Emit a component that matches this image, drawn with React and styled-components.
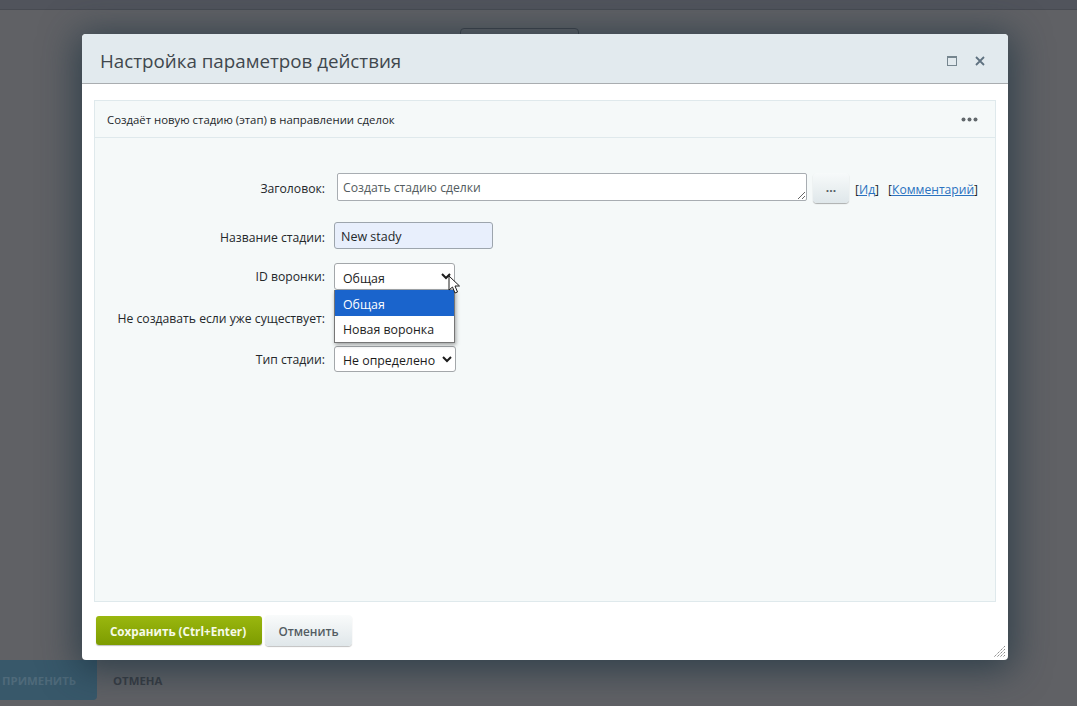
import React from "react";
import styled, { createGlobalStyle } from "styled-components";

const Global = createGlobalStyle`
html, body {
    margin : 0;
    padding : 0;
    background : #606165;
}
* {
    box-sizing : border-box;
}
`

const Page = styled.div`
width : 1077px;
height : 706px;
position : relative;
overflow : hidden;
display : flex;
flex-direction : column;
background : #606165;
font-family : "Open Sans", "Noto Sans", sans-serif;
`

const TopBar = styled.div`
height : 10px;
flex : none;
background : #51545c;
border-bottom : 1px solid #484b52;
`

const GhostRow = styled.div`
flex : 1;
padding : 18px 0 0 460px;
`

const GhostButton = styled.div`
width : 119px;
height : 30px;
border : 1px solid #3f4248;
border-radius : 4px;
`

const BottomBar = styled.div`
flex : none;
height : 46px;
padding-bottom : 6px;
display : flex;
align-items : stretch;
font-size : 11.4px;
font-weight : 700;
`

const ApplyGhost = styled.div`
width : 97px;
display : flex;
align-items : center;
padding-left : 2px;
background : #38586a;
color : #4f6a7a;
border-radius : 0 0 4px 0;
`

const CancelGhost = styled.div`
display : flex;
align-items : center;
padding-left : 16px;
color : #383b42;
`

const Overlay = styled.div`
position : absolute;
inset : 0;
padding : 34px 69px 46px 82px;
`

const Modal = styled.div`
height : 100%;
position : relative;
display : flex;
flex-direction : column;
background : #fff;
border-radius : 4px;
box-shadow : 0 5px 36px 5px rgba(28, 50, 64, 0.72);
`

const Header = styled.div`
flex : none;
height : 50px;
display : flex;
align-items : center;
justify-content : space-between;
padding : 4px 23px 0 18px;
background : #e2eaee;
border-bottom : 1px solid #a9adb0;
border-radius : 4px 4px 0 0;
`

const Title = styled.h1`
margin : 0;
font-size : 18.75px;
font-weight : 400;
color : #3f474d;
`

const HeaderIcons = styled.div`
display : flex;
align-items : center;
gap : 18px;
`

const Body = styled.div`
flex : 1;
min-height : 0;
padding : 16px 12px 0 12px;
`

const Panel = styled.div`
height : 100%;
display : flex;
flex-direction : column;
background : #f5f9f9;
border : 1px solid #dfe9ec;
`

const PanelHead = styled.div`
flex : none;
height : 37px;
display : flex;
align-items : center;
justify-content : space-between;
padding : 0 17px 0 12px;
border-bottom : 1px solid #dfe9ec;
font-size : 11.37px;
color : #24282b;
`

const Form = styled.div`
display : flex;
flex-direction : column;
gap : 14px;
padding-top : 35px;
`

const Row = styled.div`
display : flex;
align-items : flex-start;
height : ${props => props.$height}px;
margin-bottom : ${props => props.$after || 0}px;
`

const Label = styled.div`
width : 230px;
flex : none;
padding-top : ${props => props.$top}px;
text-align : right;
font-size : 12.2px;
line-height : 17px;
color : #24282b;
`

const Field = styled.div`
margin-left : ${props => props.$left}px;
display : flex;
align-items : flex-start;
position : relative;
`

const TitleArea = styled.textarea`
width : 470px;
height : 28px;
margin : 0;
padding : 6px 5px 4px 5px;
display : block;
font-family : inherit;
font-size : 12.2px;
line-height : 16px;
color : #535c60;
background : #fff;
border : 1px solid #a8adb2;
border-radius : 2px;
outline : none;
overflow : hidden;
`

const DotsButton = styled.button`
width : 36px;
height : 30px;
margin-left : 6px;
padding : 0 0 2px 0;
font-family : inherit;
font-size : 12px;
font-weight : 700;
color : #535c62;
background : linear-gradient(to bottom, #f7fafa, #dfe7ea);
border : none;
border-radius : 4px;
box-shadow : 0 1px 1px rgba(0, 0, 0, 0.3);
`

const LinkGroup = styled.div`
margin-left : ${props => props.$left}px;
padding-top : 8px;
font-size : 12.1px;
line-height : 17px;
color : #24282b;
`

const TextLink = styled.a`
color : #2a72c0;
text-decoration : underline;
`

const NameInput = styled.input`
width : 159px;
height : 27px;
padding : 2px 6px 0 6px;
font-family : inherit;
font-size : 12.5px;
color : #24282b;
background : #e8effc;
border : 1px solid #9da5ad;
border-radius : 3px;
outline : none;
`

const NativeSelect = styled.select`
width : ${props => props.$width}px;
height : ${props => props.$height}px;
padding : 3px 0 0 4px;
font-family : inherit;
font-size : 12.35px;
color : #1c1c1c;
background-color : #fff;
border : 1px solid #a3a7aa;
border-radius : 3px;
outline : none;
`

const OptionList = styled.div`
position : absolute;
top : 27px;
left : 0;
width : 121px;
z-index : 5;
background : #fff;
border : 1px solid #767676;
border-top : none;
box-shadow : 1px 2px 4px rgba(0, 0, 0, 0.35);
`

const OptionItem = styled.div`
height : 26px;
padding : ${props => props.$active ? 2 : 0}px 0 0 8px;
display : flex;
align-items : center;
font-size : 12.35px;
color : ${props => props.$active ? "#fff" : "#1c1c1c"};
background : ${props => props.$active ? "#1a64cc" : "transparent"};
`

const Cursor = styled.svg`
position : absolute;
top : 12px;
left : 114px;
z-index : 6;
`

const Footer = styled.div`
flex : none;
height : 58px;
padding : 13px 0 0 14px;
display : flex;
align-items : flex-start;
gap : 3px;
`

const SaveButton = styled.button`
width : 166px;
height : 29px;
margin-top : 1px;
padding : 0 2px 0 0;
font-family : inherit;
font-size : 11.7px;
font-weight : 700;
color : #f6fae8;
background : linear-gradient(to bottom, #9ab70f, #7d9c00);
border : none;
border-radius : 3px;
box-shadow : 0 1px 1px rgba(0, 0, 0, 0.25);
`

const CancelButton = styled.button`
width : 87px;
height : 31px;
padding : 0;
font-family : inherit;
font-size : 11.8px;
font-weight : 600;
color : #535c62;
background : linear-gradient(to bottom, #f9fbfb, #e0e7ea);
border : none;
border-radius : 4px;
box-shadow : 0 1px 1px rgba(0, 0, 0, 0.25);
`

const Grip = styled.svg`
position : absolute;
right : 2px;
bottom : 2px;
`

const App = () => {
    return (
        <Page>
            <Global />
            <TopBar />
            <GhostRow>
                <GhostButton />
            </GhostRow>
            <BottomBar>
                <ApplyGhost>ПРИМЕНИТЬ</ApplyGhost>
                <CancelGhost>ОТМЕНА</CancelGhost>
            </BottomBar>

            <Overlay>
                <Modal>
                    <Header>
                        <Title>Настройка параметров действия</Title>
                        <HeaderIcons>
                            <svg width="10" height="10" viewBox="0 0 10 10">
                                <rect x="0.5" y="0.5" width="9" height="9" fill="none" stroke="#76868f" />
                                <rect x="0" y="0" width="10" height="2" fill="#76868f" />
                            </svg>
                            <svg width="10" height="10" viewBox="0 0 10 10">
                                <path d="M1 1 L9 9 M9 1 L1 9" stroke="#5f7280" strokeWidth="1.8" />
                            </svg>
                        </HeaderIcons>
                    </Header>

                    <Body>
                        <Panel>
                            <PanelHead>
                                <span>Создаёт новую стадию (этап) в направлении сделок</span>
                                <svg width="17" height="5" viewBox="0 0 17 5">
                                    <circle cx="2.5" cy="2.5" r="2" fill="#62686c" />
                                    <circle cx="8.5" cy="2.5" r="2" fill="#62686c" />
                                    <circle cx="14.5" cy="2.5" r="2" fill="#62686c" />
                                </svg>
                            </PanelHead>
                            <Form>
                                <Row $height={28} $after={7}>
                                    <Label $top={7}>Заголовок:</Label>
                                    <Field $left={12}>
                                        <TitleArea defaultValue="Создать стадию сделки" />
                                        <DotsButton>...</DotsButton>
                                        <LinkGroup $left={6}>[<TextLink>Ид</TextLink>]</LinkGroup>
                                        <LinkGroup $left={9}>[<TextLink>Комментарий</TextLink>]</LinkGroup>
                                    </Field>
                                </Row>
                                <Row $height={27}>
                                    <Label $top={7}>Название стадии:</Label>
                                    <Field $left={9}>
                                        <NameInput defaultValue="New stady" />
                                    </Field>
                                </Row>
                                <Row $height={27}>
                                    <Label $top={5}>ID воронки:</Label>
                                    <Field $left={9}>
                                        <NativeSelect $width={121} $height={27} defaultValue="common">
                                            <option value="common">Общая</option>
                                            <option value="new">Новая воронка</option>
                                        </NativeSelect>
                                        <OptionList>
                                            <OptionItem $active>Общая</OptionItem>
                                            <OptionItem>Новая воронка</OptionItem>
                                        </OptionList>
                                        <Cursor width="13" height="20" viewBox="0 0 13 20">
                                            <path d="M1 1 L1 15 L4.5 12 L7 18 L9.5 17 L7 11 L11.5 11 Z" fill="#fff" stroke="#1c1c1c" strokeWidth="1" />
                                        </Cursor>
                                    </Field>
                                </Row>
                                <Row $height={27} $after={1}>
                                    <Label $top={6}>Не создавать если уже существует:</Label>
                                    <Field $left={9}>
                                        <NativeSelect $width={80} $height={27} defaultValue="no">
                                            <option value="no">Нет</option>
                                        </NativeSelect>
                                    </Field>
                                </Row>
                                <Row $height={26}>
                                    <Label $top={5}>Тип стадии:</Label>
                                    <Field $left={9}>
                                        <NativeSelect $width={122} $height={26} defaultValue="none">
                                            <option value="none">Не определено</option>
                                        </NativeSelect>
                                    </Field>
                                </Row>
                            </Form>
                        </Panel>
                    </Body>

                    <Footer>
                        <SaveButton>Сохранить (Ctrl+Enter)</SaveButton>
                        <CancelButton>Отменить</CancelButton>
                    </Footer>

                    <Grip width="13" height="13" viewBox="0 0 13 13">
                        <path d="M12 1 L1 12 M12 4 L4 12 M12 7 L7 12 M12 10 L10 12" stroke="#8a8a8a" strokeWidth="1" strokeDasharray="1.4 0.7" />
                    </Grip>
                </Modal>
            </Overlay>
        </Page>
    )
}

export default App;
